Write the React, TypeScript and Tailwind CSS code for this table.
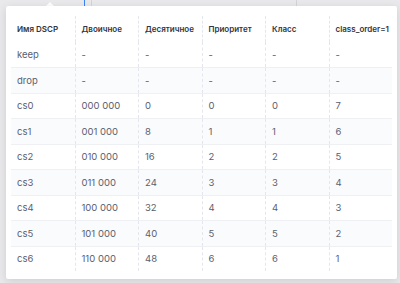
import React from 'react';

// DSCP mapping table shown in a popover over the config grid
const rows = [
  { name: 'keep', bin: '-', dec: '-', prio: '-', cls: '-', order: '-' },
  { name: 'drop', bin: '-', dec: '-', prio: '-', cls: '-', order: '-' },
  { name: 'cs0', bin: '000 000', dec: '0', prio: '0', cls: '0', order: '7' },
  { name: 'cs1', bin: '001 000', dec: '8', prio: '1', cls: '1', order: '6' },
  { name: 'cs2', bin: '010 000', dec: '16', prio: '2', cls: '2', order: '5' },
  { name: 'cs3', bin: '011 000', dec: '24', prio: '3', cls: '3', order: '4' },
  { name: 'cs4', bin: '100 000', dec: '32', prio: '4', cls: '4', order: '3' },
  { name: 'cs5', bin: '101 000', dec: '40', prio: '5', cls: '5', order: '2' },
  { name: 'cs6', bin: '110 000', dec: '48', prio: '6', cls: '6', order: '1' },
];

const headers = ['Имя DSCP', 'Двоичное', 'Десятичное', 'Приоритет', 'Класс', 'class_order=1'];

const Cell = ({ children, first, head }: { children: React.ReactNode; first?: boolean; head?: boolean }) => (
  <div
    className={`flex items-center pl-[6px] whitespace-nowrap ${first ? '' : 'border-l border-dashed border-[#e4e6ee]'} ${
      head ? 'font-semibold text-[8px] text-[#2f3542]' : 'text-[9.5px] text-[#5a6070]'
    }`}
  >
    {children}
  </div>
);

export default function App() {
  return (
    <div
      className="relative w-[400px] h-[283px] overflow-hidden bg-[#e9e9eb]"
      style={{ fontFamily: 'Inter, "Noto Sans", sans-serif' }}
    >
      {/* background grid peeking out behind the popover */}
      <div className="flex h-[6px]">
        <div className="w-[85px] border-r border-[#3b82f6]" />
        <div className="w-[7px] border-r border-[#d4d4d8]" />
        <div className="w-[205px] border-r border-[#d4d4d8]" />
      </div>

      <div className="absolute left-[45px] top-[2px] w-0 h-0 border-l-[5px] border-r-[5px] border-b-[5px] border-l-transparent border-r-transparent border-b-white" />

      <div className="absolute left-[6px] top-[6px] w-[391px] h-[273px] bg-white rounded-[2px] shadow-[0_2px_8px_rgba(0,0,0,0.12)] pl-[5px] pr-[5px] pt-[10px]">
        <div className="leading-none">
          <div className="grid grid-cols-6 h-[25.5px]">
            {headers.map((h, i) => (
              <Cell key={h} first={i === 0} head>
                {h}
              </Cell>
            ))}
          </div>
          {rows.map((r, idx) => (
            <div
              key={r.name}
              className={`grid grid-cols-6 h-[25.5px] ${idx > 0 ? 'border-t border-[#eef0f4]' : ''} ${
                idx % 2 === 1 ? 'bg-[#fafbfc]' : 'bg-white'
              }`}
            >
              <Cell first>{r.name}</Cell>
              <Cell>{r.bin}</Cell>
              <Cell>{r.dec}</Cell>
              <Cell>{r.prio}</Cell>
              <Cell>{r.cls}</Cell>
              <Cell>{r.order}</Cell>
            </div>
          ))}
        </div>
      </div>
    </div>
  );
}
